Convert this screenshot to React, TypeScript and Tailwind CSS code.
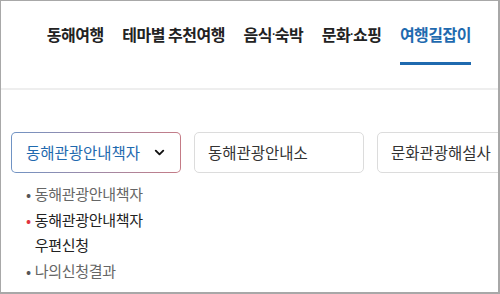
import { ChevronDown } from 'lucide-react';

const font = { fontFamily: '"Noto Sans CJK KR", "Noto Sans", sans-serif' };

const navItems = ['동해여행', '테마별 추천여행', '음식·숙박', '문화·쇼핑', '여행길잡이'];

// the middle dot in the CJK font is full width; the reference uses a narrow one
function NavLabel({ text }: { text: string }) {
  const parts = text.split('·');
  if (parts.length === 1) return <>{text}</>;
  return (
    <>
      {parts[0]}
      <span className="font-['Liberation_Sans'] font-normal mx-[-1px]">·</span>
      {parts[1]}
    </>
  );
}

export default function App() {
  return (
    <div
      style={font}
      className="w-[500px] h-[294px] overflow-hidden bg-white border-t border-l border-r-2 border-b-2 border-[#a8a8a8]"
    >
      <nav className="h-[89px] border-b-2 border-[#eeeeee] flex justify-end pr-[27px]">
        <ul className="flex gap-[18.5px] h-full">
          {navItems.map((item, i) => (
            <li
              key={item}
              className={
                'flex items-start pt-[21px] text-[16px] font-bold tracking-[-0.5px] border-b-[3px] h-[64px] ' +
                (i === navItems.length - 1 ? 'text-[#1f6aaf] border-[#1f6aaf]' : 'text-[#222] border-transparent')
              }
            >
              <NavLabel text={item} />
            </li>
          ))}
        </ul>
      </nav>

      <div className="flex gap-[13px] pl-[10px] pt-[42px]">
        <div className="shrink-0 w-[170px] h-[41px] rounded-[5px] p-px bg-gradient-to-r from-[#6f93c4] to-[#c57b86]">
          <button className="w-full h-full rounded-[4px] bg-white flex items-center justify-between pl-[14px] pr-[13px]">
            <span className="text-[15.5px] text-[#1f6aaf]">동해관광안내책자</span>
            <ChevronDown size={15} strokeWidth={3} className="text-[#111]" />
          </button>
        </div>
        <div className="shrink-0 w-[170px] h-[41px] rounded-[5px] border border-[#dcdcdc] flex items-center pl-[13px] text-[15.5px] text-[#333]">
          동해관광안내소
        </div>
        <div className="shrink-0 w-[170px] h-[41px] rounded-[5px] border border-[#dcdcdc] flex items-center pl-[13px] text-[15.5px] text-[#333]">
          문화관광해설사
        </div>
      </div>

      <ul className="pl-[25px] pt-[8px] text-[15px] leading-[25.5px] tracking-[-0.3px]">
        <li className="flex gap-[4px] text-[#666]">
          <span className="text-[#555]">•</span>
          <span>동해관광안내책자</span>
        </li>
        <li className="flex gap-[4px] text-[#222]">
          <span className="text-[#e0343f]">•</span>
          <span>
            동해관광안내책자
            <br />
            우편신청
          </span>
        </li>
        <li className="flex gap-[4px] text-[#666]">
          <span className="text-[#555]">•</span>
          <span>나의신청결과</span>
        </li>
      </ul>
    </div>
  );
}
